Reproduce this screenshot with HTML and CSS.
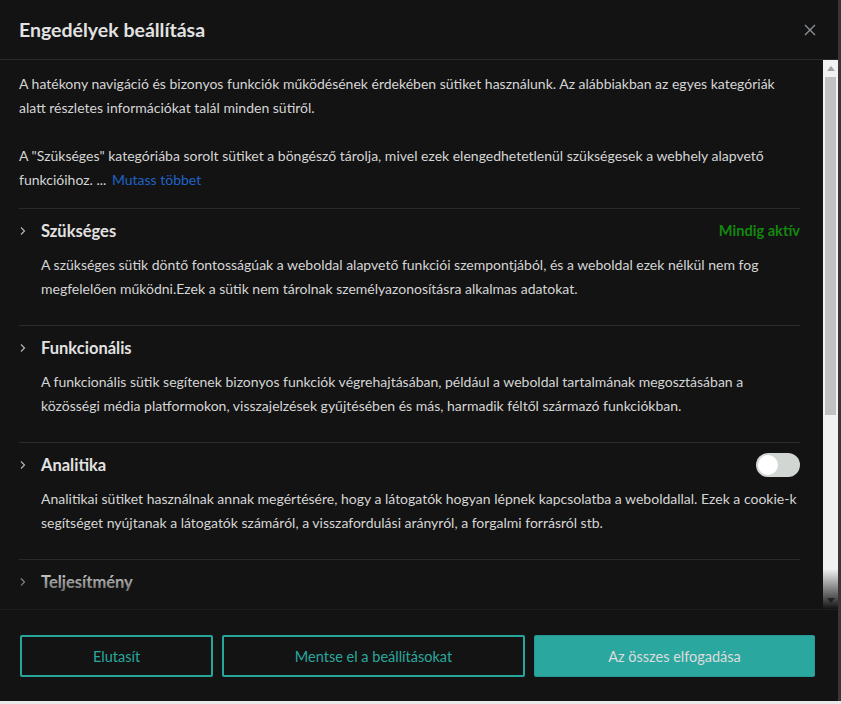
FILE: index.html
```html
<!DOCTYPE html>
<html lang="hu">
<head>
  <meta charset="UTF-8">
  <title>Engedélyek beállítása</title>
  <link rel="stylesheet" href="styles.css">
</head>
<body>
  <div class="modal">
    <div class="modal-header">
      <h2>Engedélyek beállítása</h2>
      <button class="close-btn" aria-label="Bezárás">
        <svg width="12" height="12" viewBox="0 0 12 12"><path d="M1 1L11 11M11 1L1 11" stroke="#8d939c" stroke-width="1.3" fill="none"/></svg>
      </button>
    </div>
    <div class="modal-body-wrap">
      <div class="modal-body">
        <p class="intro">A hatékony navigáció és bizonyos funkciók működésének érdekében sütiket használunk. Az alábbiakban az egyes kategóriák alatt részletes információkat talál minden sütiről.</p>
        <p class="intro">A "Szükséges" kategóriába sorolt sütiket a böngésző tárolja, mivel ezek elengedhetetlenül szükségesek a webhely alapvető funkcióihoz. ... <a href="#" class="more-link">Mutass többet</a></p>

        <div class="category">
          <div class="cat-head">
            <svg class="chevron" width="8" height="10" viewBox="0 0 8 10"><path d="M2 1.5L5.5 5L2 8.5" stroke="#b5b5b5" stroke-width="1.2" fill="none"/></svg>
            <span class="cat-title">Szükséges</span>
            <span class="always">Mindig aktív</span>
          </div>
          <p class="cat-desc">A szükséges sütik döntő fontosságúak a weboldal alapvető funkciói szempontjából, és a weboldal ezek nélkül nem fog megfelelően működni.Ezek a sütik nem tárolnak személyazonosításra alkalmas adatokat.</p>
        </div>

        <div class="category">
          <div class="cat-head">
            <svg class="chevron" width="8" height="10" viewBox="0 0 8 10"><path d="M2 1.5L5.5 5L2 8.5" stroke="#b5b5b5" stroke-width="1.2" fill="none"/></svg>
            <span class="cat-title">Funkcionális</span>
          </div>
          <p class="cat-desc">A funkcionális sütik segítenek bizonyos funkciók végrehajtásában, például a weboldal tartalmának megosztásában a közösségi média platformokon, visszajelzések gyűjtésében és más, harmadik féltől származó funkciókban.</p>
        </div>

        <div class="category">
          <div class="cat-head">
            <svg class="chevron" width="8" height="10" viewBox="0 0 8 10"><path d="M2 1.5L5.5 5L2 8.5" stroke="#b5b5b5" stroke-width="1.2" fill="none"/></svg>
            <span class="cat-title">Analitika</span>
            <span class="toggle"><span class="knob"></span></span>
          </div>
          <p class="cat-desc">Analitikai sütiket használnak annak megértésére, hogy a látogatók hogyan lépnek kapcsolatba a weboldallal. Ezek a cookie-k segítséget nyújtanak a látogatók számáról, a visszafordulási arányról, a forgalmi forrásról stb.</p>
        </div>

        <div class="category">
          <div class="cat-head">
            <svg class="chevron" width="8" height="10" viewBox="0 0 8 10"><path d="M2 1.5L5.5 5L2 8.5" stroke="#b5b5b5" stroke-width="1.2" fill="none"/></svg>
            <span class="cat-title">Teljesítmény</span>
          </div>
          <p class="cat-desc">A teljesítménysütik a weboldal kulcsfontosságú teljesítménymutatóinak megértésére és elemzésére szolgálnak, ami segít jobb felhasználói élményt nyújtani a látogatóknak.</p>
        </div>
      </div>
      <div class="scrollbar">
        <div class="sb-btn"><svg width="8" height="5" viewBox="0 0 8 5"><path d="M0 5L4 0L8 5Z" fill="#a3a3a3"/></svg></div>
        <div class="sb-track"><div class="sb-thumb"></div></div>
        <div class="sb-btn"><svg width="8" height="5" viewBox="0 0 8 5"><path d="M0 0L4 5L8 0Z" fill="#505050"/></svg></div>
      </div>
    </div>
    <div class="modal-footer">
      <button class="btn btn-outline">Elutasít</button>
      <button class="btn btn-outline">Mentse el a beállításokat</button>
      <button class="btn btn-primary">Az összes elfogadása</button>
    </div>
  </div>
</body>
</html>
```

FILE: styles.css
```css
html, body { margin: 0; height: 100%; }
body { background: #e9e9e9; font-family: Lato, "Noto Sans", sans-serif; }
.modal { width: 838px; height: 701px; background: #131313; border-right: 3px solid #3b3636; display: flex; flex-direction: column; color: #d5d5d5; }

.modal-header { height: 59px; border-bottom: 1px solid #2a2a2a; display: flex; align-items: center; justify-content: space-between; padding: 0 22px 0 19px; flex-shrink: 0; }
.modal-header h2 { margin: 0; font-size: 19.5px; font-weight: 700; color: #e2e2e2; }
.close-btn { background: none; border: none; padding: 0; cursor: pointer; display: flex; }

.modal-body-wrap { flex: 1; position: relative; min-height: 0; display: flex; }
.modal-body-wrap::after { content: ""; position: absolute; left: 0; right: 0; bottom: 0; height: 40px; background: linear-gradient(to bottom, rgba(19,19,19,0), #131313); pointer-events: none; }
.modal-body { flex: 1; overflow: hidden; padding: 12px 23px 20px 19px; font-size: 14px; line-height: 24px; }

.scrollbar { width: 15px; background: #f1f1f1; display: flex; flex-direction: column; flex-shrink: 0; }
.sb-btn { height: 17px; display: flex; align-items: center; justify-content: center; }
.sb-track { flex: 1; padding: 0 2px; }
.sb-thumb { height: 338px; background: #c1c1c1; }

.intro { margin: 0 0 24px 0; }
.intro:last-of-type { margin-bottom: 16px; }
.more-link { color: #2062c8; text-decoration: none; margin-left: 2px; }

.category { border-top: 1px solid #2a2a2a; padding: 11px 0 24px 0; }
.cat-head { display: flex; align-items: center; height: 22px; }
.chevron { margin: 0 14px 0 0; flex-shrink: 0; }
.cat-title { font-size: 16.5px; font-weight: 700; color: #e2e2e2; }
.always { margin-left: auto; color: #13870f; font-weight: 700; font-size: 14.6px; }
.toggle { margin-left: auto; width: 44px; height: 24px; border-radius: 12px; background: #d1d6d3; position: relative; }
.knob { position: absolute; left: 2px; top: 2px; width: 20px; height: 20px; border-radius: 50%; background: #fff; }
.cat-desc { margin: 11px 0 0 22px; }

.modal-footer { border-top: 1px solid #1e1e1e; padding: 25px 23px 24px 20px; display: grid; grid-template-columns: 193px 303px 1fr; gap: 9px; flex-shrink: 0; }
.btn { height: 42px; font-family: inherit; font-size: 14.5px; border-radius: 2px; cursor: pointer; }
.btn-outline { background: transparent; border: 2px solid #28a69c; color: #2aa89e; }
.btn-primary { background: #2aa8a0; border: 1px solid #249a92; color: #dcdcdc; }
```
